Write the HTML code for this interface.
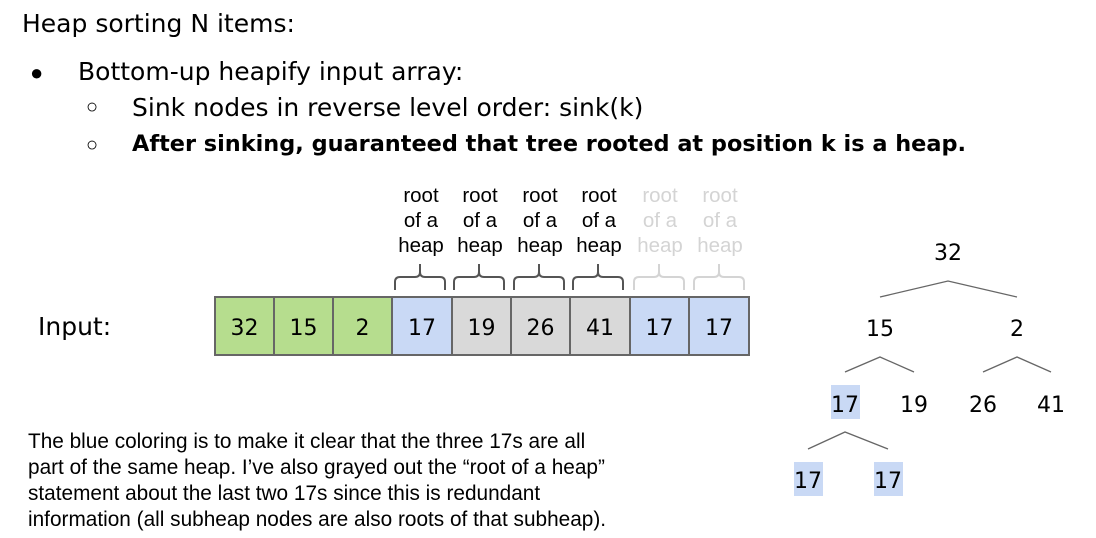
<!DOCTYPE html>
<html><head><style>
body{margin:0;width:1096px;height:538px;background:#fff;font-family:"DejaVu Sans",sans-serif;position:relative;overflow:hidden}
.t{position:absolute;white-space:nowrap;color:#000}
.c{position:absolute;top:296px;height:60px;border:2px solid #666;box-sizing:border-box;font-size:22px;text-align:center;line-height:61px}
.r{position:absolute;top:183px;width:60px;text-align:center;font-size:20.5px;line-height:25px;font-family:"Liberation Sans",sans-serif}
.n{position:absolute;font-size:22px;line-height:32px;text-align:center}
</style></head><body>
<div class="t" style="left:22px;top:9px;font-size:25px">Heap sorting N items:</div>
<div class="t" style="left:30px;top:60px;font-size:22px;font-family:'Liberation Sans'">●</div>
<div class="t" style="left:78px;top:57px;font-size:25px">Bottom-up heapify input array:</div>
<div class="t" style="left:86px;top:96px;font-size:20px;font-family:'Liberation Sans'">○</div>
<div class="t" style="left:132px;top:93px;font-size:25px">Sink nodes in reverse level order: sink(k)</div>
<div class="t" style="left:86px;top:134px;font-size:20px;font-family:'Liberation Sans'">○</div>
<div class="t" style="left:132px;top:131px;font-size:22.4px;font-weight:bold">After sinking, guaranteed that tree rooted at position k is a heap.</div>
<div class="t" style="left:38px;top:312px;font-size:25px">Input:</div>
<div class="c" style="left:214px;width:61px;background:#b6dd8e">32</div>
<div class="c" style="left:273px;width:61px;background:#b6dd8e">15</div>
<div class="c" style="left:332px;width:61px;background:#b6dd8e">2</div>
<div class="c" style="left:391px;width:62px;background:#c9d9f5">17</div>
<div class="c" style="left:451px;width:61px;background:#d9d9d9">19</div>
<div class="c" style="left:510px;width:61px;background:#d9d9d9">26</div>
<div class="c" style="left:569px;width:62px;background:#d9d9d9">41</div>
<div class="c" style="left:629px;width:61px;background:#c9d9f5">17</div>
<div class="c" style="left:688px;width:62px;background:#c9d9f5">17</div>
<div class="r" style="left:391px">root<br>of a<br>heap</div>
<div class="r" style="left:450px">root<br>of a<br>heap</div>
<div class="r" style="left:510px">root<br>of a<br>heap</div>
<div class="r" style="left:569px">root<br>of a<br>heap</div>
<div class="r" style="left:630px;color:#d4d4d4">root<br>of a<br>heap</div>
<div class="r" style="left:690px;color:#d4d4d4">root<br>of a<br>heap</div>
<svg style="position:absolute;left:0;top:0" width="1096" height="538">
<g fill="none" stroke-width="2">
<path d="M395 290v-8q0-5 5-5h15q5 0 5-5v-8v8q0 5 5 5h15q5 0 5 5v8" stroke="#555"/>
<path d="M454 290v-8q0-5 5-5h15q5 0 5-5v-8v8q0 5 5 5h15q5 0 5 5v8" stroke="#555"/>
<path d="M514 290v-8q0-5 5-5h15q5 0 5-5v-8v8q0 5 5 5h15q5 0 5 5v8" stroke="#555"/>
<path d="M573 290v-8q0-5 5-5h15q5 0 5-5v-8v8q0 5 5 5h15q5 0 5 5v8" stroke="#555"/>
<path d="M634 290v-8q0-5 5-5h15q5 0 5-5v-8v8q0 5 5 5h15q5 0 5 5v8" stroke="#d4d4d4"/>
<path d="M694 290v-8q0-5 5-5h15q5 0 5-5v-8v8q0 5 5 5h15q5 0 5 5v8" stroke="#d4d4d4"/>
</g>
<g fill="none" stroke="#666" stroke-width="1.3">
<path d="M880 297L948 281L1017 297"/>
<path d="M845 372L880 357L914 372"/>
<path d="M983 372L1017 357L1051 372"/>
<path d="M808 449L845 432L888 449"/>
</g>
<rect x="831" y="385" width="29" height="34" fill="#c9d9f5"/>
<rect x="794" y="462" width="29" height="34" fill="#c9d9f5"/>
<rect x="874" y="462" width="29" height="34" fill="#c9d9f5"/>
</svg>
<div class="n" style="left:918px;top:238px;width:60px">32</div>
<div class="n" style="left:850px;top:314px;width:60px">15</div>
<div class="n" style="left:987px;top:314px;width:60px">2</div>
<div class="n" style="left:815px;top:390px;width:60px">17</div>
<div class="n" style="left:884px;top:390px;width:60px">19</div>
<div class="n" style="left:953px;top:390px;width:60px">26</div>
<div class="n" style="left:1021px;top:390px;width:60px">41</div>
<div class="n" style="left:778px;top:466px;width:60px">17</div>
<div class="n" style="left:858px;top:466px;width:60px">17</div>
<div class="t" style="left:28px;top:429px;font-size:20.8px;line-height:26px;font-family:'Liberation Sans',sans-serif">The blue coloring is to make it clear that the three 17s are all<br>part of the same heap. I’ve also grayed out the “root of a heap”<br>statement about the last two 17s since this is redundant<br>information (all subheap nodes are also roots of that subheap).</div>
</body></html>
